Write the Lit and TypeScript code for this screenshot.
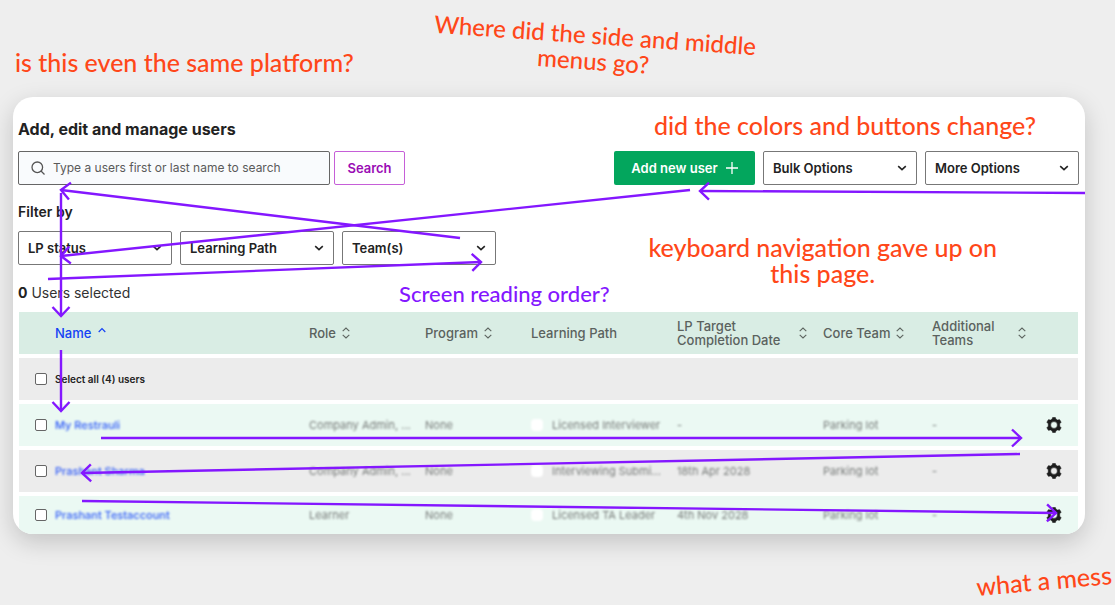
import { LitElement, html, css, svg, nothing } from "lit";
import { customElement } from "lit/decorators.js";
import { classMap } from "lit/directives/class-map.js";

type Point = [number, number];

interface User {
  name: string;
  role: string;
  program: string;
  path: string;
  target: string;
  core: string;
  extra: string;
}

const users: User[] = [
  { name: "My Restrauli", role: "Company Admin, ...", program: "None", path: "Licensed Interviewer", target: "-", core: "Parking lot", extra: "-" },
  { name: "Prashant Sharma", role: "Company Admin, ...", program: "None", path: "Interviewing Submi...", target: "18th Apr 2028", core: "Parking lot", extra: "-" },
  { name: "Prashant Testaccount", role: "Learner", program: "None", path: "Licensed TA Leader", target: "4th Nov 2028", core: "Parking lot", extra: "-" },
];

const arrows: { from: Point; to: Point }[] = [
  { from: [460, 238], to: [61, 190] },
  { from: [690, 190], to: [61, 256] },
  { from: [61, 193], to: [61, 316] },
  { from: [48, 279], to: [481, 262] },
  { from: [1085, 193], to: [700, 191] },
  { from: [61, 350], to: [61, 411] },
  { from: [101, 438], to: [1021, 438] },
  { from: [1020, 454], to: [82, 473] },
  { from: [82, 501], to: [1056, 513] },
];

const columns = ["check", "name", "role", "program", "path", "target", "core", "extra", "gear"];

const chevron = html`<svg class="chevron" viewBox="0 0 10 10" aria-hidden="true">
  <path d="M1.2 3.2 5 6.7 8.8 3.2" fill="none" stroke="#222" stroke-width="1.6" />
</svg>`;

const sortIcon = html`<svg class="sort" viewBox="0 0 8 12" aria-hidden="true">
  <path d="M.7 4.2 4 1 7.3 4.2M.7 7.8 4 11 7.3 7.8" fill="none" stroke="#5d6560" stroke-width="1.1" />
</svg>`;

const gearIcon = html`<svg class="gear" viewBox="0 0 16 16" aria-hidden="true">
  <path
    fill="#1d1d1d"
    fill-rule="evenodd"
    stroke="#1d1d1d"
    stroke-width=".6"
    stroke-linejoin="round"
    d="M6.7.4h2.6l.7 1.9 1.4.8 2.2-.4 1.5 2.5-1.4 1.6v2.4l1.4 1.6-1.5 2.5-2.2-.4-1.4.8-.7 1.9H6.7L6 13.7l-1.4-.8-2.2.4-1.5-2.5 1.4-1.6V6.8L.9 5.2l1.500-2.500 2.200.4L6 2.300zM8 4.600a3.400 3.400 0 1 0 0 6.800 3.400 3.400 0 0 0 0-6.800z"
  />
</svg>`;

@customElement("app-root")
export class AppRoot extends LitElement {
  static styles = css`
    :host {
      display: block;
      position: relative;
      box-sizing: border-box;
      min-height: 100vh;
      padding: 97px 30px 71px 13px;
      overflow: hidden;
      background: #eeeeee;
      color: #222;
      font-family: Inter, "Liberation Sans", sans-serif;
      font-size: 13px;
      line-height: 16px;
    }
    * { box-sizing: border-box; }
    .card {
      padding: 22px 6px 0 5px;
      border-radius: 20px;
      background: #fff;
      overflow: hidden;
      box-shadow: 0 8px 24px rgba(0, 0, 0, 0.18);
    }
    h1 { margin: 0 0 12px; font-size: 16px; line-height: 20px; font-weight: 700; }
    h2 { margin: 17px 0 9px; font-size: 14px; line-height: 20px; font-weight: 600; }
    .row { display: flex; gap: 8px; }
    .bar { justify-content: space-between; }
    .search { display: flex; gap: 4px; }
    .field {
      display: flex;
      align-items: center;
      gap: 8px;
      width: 312px;
      height: 34px;
      padding: 0 12px;
      border: 1px solid #666;
      border-radius: 2px;
      background: #f9fbfd;
    }
    .field svg { width: 14px; height: 14px; flex: none; }
    .field input {
      flex: 1;
      min-width: 0;
      padding: 0;
      border: 0;
      outline: 0;
      background: none;
      font: inherit;
      font-size: 12px;
    }
    .field input::placeholder { color: #5a5a5a; opacity: 1; }
    button { font: inherit; cursor: pointer; }
    .outline, .primary {
      display: flex;
      align-items: center;
      justify-content: center;
      height: 34px;
      border-radius: 2px;
      font-size: 13px;
      font-weight: 600;
    }
    .outline { width: 71px; padding: 0; border: 1px solid #c65fd8; background: #fff; color: #9a0cb4; }
    .primary { width: 141px; gap: 8px; padding: 0; border: 0; background: #03a65d; color: #fff; }
    .primary svg { width: 12px; height: 12px; }
    .select { display: grid; align-items: center; width: 154px; }
    .select > * { grid-area: 1 / 1; }
    .select select {
      appearance: none;
      width: 100%;
      height: 34px;
      padding: 0 9px;
      border: 1px solid #777;
      border-radius: 2px;
      background: #fff;
      color: #222;
      font: inherit;
      font-weight: 600;
    }
    .chevron { width: 10px; height: 10px; margin-right: 10px; justify-self: end; pointer-events: none; }
    .count { margin: 18px 0 9px; font-size: 14px; line-height: 20px; color: #333; }
    .count b { color: #222; }
    table {
      width: calc(100% - 2px);
      margin: 0 1px;
      table-layout: fixed;
      border-collapse: separate;
      border-spacing: 0;
      font-size: 13px;
      line-height: 14px;
    }
    th, td { height: 46px; padding: 0; text-align: left; border-bottom: 4px solid #fff; }
    thead tr { background: #d9ede4; }
    th { color: #5b625e; font-weight: 500; }
    tbody tr { background: #ebf9f3; }
    tbody tr.alt { background: #ececec; }
    tbody tr:last-child td { height: 38px; border-bottom: 0; }
    .check { width: 36px; }
    .name { width: 254px; }
    .role { width: 116px; }
    .program { width: 106px; }
    .path { width: 146px; }
    .target { width: 146px; }
    .core { width: 109px; }
    .extra { width: 110px; }
    .gear-col { width: 36px; }
    .head { display: flex; align-items: center; gap: 6px; }
    .spread { justify-content: space-between; padding-right: 16px; }
    .active { color: #1341f5; gap: 7px; }
    .caret { width: 8px; height: 12px; }
    .sort { width: 8px; height: 12px; flex: none; }
    input[type="checkbox"] {
      appearance: none;
      display: block;
      width: 12px;
      height: 12px;
      margin: 0 0 0 16px;
      border: 1px solid #666;
      border-radius: 2px;
      background: #fff;
    }
    .all { display: block; font-size: 10px; font-weight: 600; color: #222; }
    .soft { display: block; filter: blur(1px); color: #777b79; font-size: 11px; white-space: nowrap; }
    a.soft { color: #2f5bf7; text-decoration: none; font-weight: 500; }
    .soft.badge { display: flex; align-items: center; gap: 9px; }
    .dot { width: 12px; height: 12px; border-radius: 4px; background: #fff; }
    .settings { display: block; padding: 0; margin-left: 4px; border: 0; background: none; }
    .gear { display: block; width: 16px; height: 16px; }
    .arrows { position: absolute; top: 0; left: 0; width: 100%; height: 605px; pointer-events: none; }
    .note {
      position: absolute;
      margin: 0;
      color: #ff4719;
      font-family: Lato, "Open Sans", sans-serif;
      font-size: 25px;
      font-weight: 500;
      line-height: 26px;
      text-align: center;
      white-space: nowrap;
    }
    .platform { left: 15px; top: 49px; }
    .menus { left: 433px; top: 22px; font-size: 24px; transform: rotate(4deg); }
    .colors { right: 79px; top: 112px; }
    .keyboard { right: 118px; top: 234px; }
    .mess { right: 3px; top: 567px; transform: rotate(-5deg); }
    .order { left: 399px; top: 281px; font-size: 22px; color: #8417ff; }
  `;

  private select(label: string) {
    return html`<label class="select">
      <select aria-label=${label}><option>${label}</option></select>
      ${chevron}
    </label>`;
  }

  private head(label: unknown, spread = false) {
    return html`<th scope="col">
      <div class=${classMap({ head: true, spread })}><span>${label}</span>${sortIcon}</div>
    </th>`;
  }

  private arrow({ from, to }: { from: Point; to: Point }) {
    const angle = (Math.atan2(to[1] - from[1], to[0] - from[0]) * 180) / Math.PI;
    return svg`<path d="M${from[0]} ${from[1]} L${to[0]} ${to[1]}" />
      <path d="M-9 -8.5 L0 0 L-9 8.5" transform="translate(${to[0]} ${to[1]}) rotate(${angle})" />`;
  }

  private userRow(user: User, index: number) {
    return html`<tr class=${index % 2 ? "alt" : nothing}>
      <td><input type="checkbox" aria-label=${`Select ${user.name}`} /></td>
      <td><a class="soft" href="#">${user.name}</a></td>
      <td><div class="soft">${user.role}</div></td>
      <td><div class="soft">${user.program}</div></td>
      <td><div class="soft badge"><span class="dot"></span>${user.path}</div></td>
      <td><div class="soft">${user.target}</div></td>
      <td><div class="soft">${user.core}</div></td>
      <td><div class="soft">${user.extra}</div></td>
      <td><button class="settings" aria-label=${`Settings for ${user.name}`}>${gearIcon}</button></td>
    </tr>`;
  }

  render() {
    return html`
      <main class="card">
        <h1>Add, edit and manage users</h1>
        <div class="row bar">
          <form class="search" @submit=${(e: Event) => e.preventDefault()}>
            <label class="field">
              <svg viewBox="0 0 14 14" fill="none" stroke="#555" stroke-width="1.3" aria-hidden="true">
                <circle cx="6.3" cy="6.3" r="5.3" /><path d="m10 10 3.5 3.5" />
              </svg>
              <input type="text" aria-label="Search users" placeholder="Type a users first or last name to search" />
            </label>
            <button class="outline">Search</button>
          </form>
          <div class="row">
            <button class="primary">
              Add new user
              <svg viewBox="0 0 12 12" stroke="#fff" stroke-width="1.3" aria-hidden="true"><path d="M6 0v12M0 6h12" /></svg>
            </button>
            ${this.select("Bulk Options")}${this.select("More Options")}
          </div>
        </div>
        <h2>Filter by</h2>
        <div class="row">
          ${this.select("LP status")}${this.select("Learning Path")}${this.select("Team(s)")}
        </div>
        <p class="count"><b>0</b> Users selected</p>
        <table>
          <colgroup>${columns.map((c) => html`<col class=${c === "gear" ? "gear-col" : c} />`)}</colgroup>
          <thead>
            <tr>
              <th></th>
              <th scope="col" aria-sort="ascending">
                <div class="head active">
                  Name
                  <svg class="caret" viewBox="0 0 8 12" aria-hidden="true"><path d="M.7 5 4 1.7 7.3 5" fill="none" stroke="#1341f5" stroke-width="1.2" /></svg>
                </div>
              </th>
              ${this.head("Role")}${this.head("Program")}
              <th scope="col">Learning Path</th>
              ${this.head(html`LP Target<br />Completion Date`, true)}
              ${this.head("Core Team")}
              ${this.head(html`Additional<br />Teams`, true)}
              <th></th>
            </tr>
          </thead>
          <tbody>
            <tr class="alt">
              <td><input type="checkbox" id="all" /></td>
              <td colspan="8"><label class="all" for="all">Select all (4) users</label></td>
            </tr>
            ${users.map((user, i) => this.userRow(user, i))}
          </tbody>
        </table>
      </main>

      <svg class="arrows" viewBox="0 0 1115 605" preserveAspectRatio="none" fill="none" stroke="#8417ff" stroke-width="2.4" aria-hidden="true">
        ${arrows.map((a) => this.arrow(a))}
      </svg>

      <p class="note platform">is this even the same platform?</p>
      <p class="note menus">Where did the side and middle<br />menus go?</p>
      <p class="note colors">did the colors and buttons change?</p>
      <p class="note keyboard">keyboard navigation gave up on<br />this page.</p>
      <p class="note order">Screen reading order?</p>
      <p class="note mess">what a mess</p>
    `;
  }
}
